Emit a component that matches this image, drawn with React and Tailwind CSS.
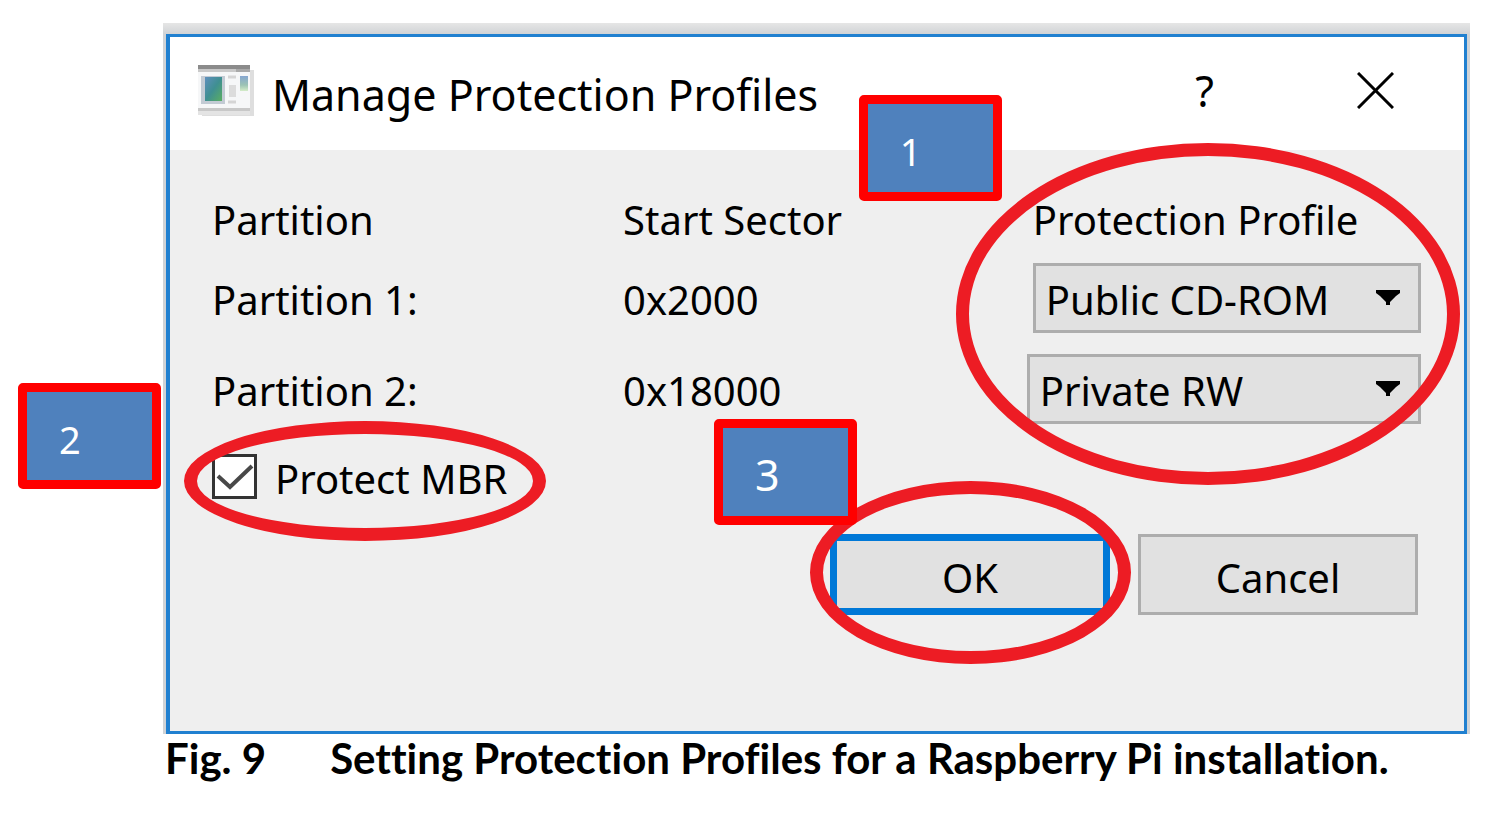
import { useState } from 'react'

const PROFILES = ['Public CD-ROM', 'Private RW', 'Private CD-ROM', 'Public RW']

const PARTITIONS = [
  { id: 1, sector: '0x2000', profile: 'Public CD-ROM', indent: true },
  { id: 2, sector: '0x18000', profile: 'Private RW', indent: false },
]

export default function App() {
  return (
    <main className="min-h-screen bg-white font-['Noto_Sans',sans-serif] text-black">
      <figure className="mr-[18px] ml-[163px] pt-[23px]">
        <div className="bg-[#d0d3d6] bg-linear-to-b from-[#e6e6e6] to-[#d0d3d6] to-[11px] px-[3px] pt-[11px]">
          <ProfilesDialog />
        </div>
        <figcaption className="flex gap-[64px] pl-[2px] font-['Lato',sans-serif] text-[42px] leading-[48px] font-bold [font-variant-ligatures:none]">
          <span>Fig. 9</span>
          <span>Setting Protection Profiles for a Raspberry Pi installation.</span>
        </figcaption>
      </figure>
    </main>
  )
}

function ProfilesDialog() {
  const [protect, setProtect] = useState(true)

  return (
    <section className="border-[3px] border-l-4 border-[#2080d0] bg-[#efefef] text-[40px]">
      <header className="flex h-[113px] items-center bg-white pr-[70px] pb-[6px] pl-[28px]">
        <WindowIcon />
        <h1 className="ml-[18px] grow pt-[10px] text-[43px]">Manage Protection Profiles</h1>
        <button type="button" aria-label="Help" className="mr-[143px] text-[43px] leading-none">
          ?
        </button>
        <button type="button" aria-label="Close">
          <svg viewBox="0 0 37 37" className="size-[37px]" stroke="#000" strokeWidth="3">
            <path d="M1 1L36 36M36 1L1 36" />
          </svg>
        </button>
      </header>

      <div className="pt-[33px] pr-[43px] pb-[116px] pl-[42px]">
        <table className="w-full table-fixed text-left leading-[74px]">
          <thead>
            <tr>
              <th className="w-[34%] pb-[6px] font-normal">Partition</th>
              <th className="w-[33.4%] pb-[6px] font-normal">Start Sector</th>
              <th className="relative pb-[6px] pl-[6px] font-normal whitespace-nowrap">
                Protection Profile
                <Ring className="-top-[40px] -left-[71px] h-[342px] w-[504px]" />
                <Badge className="-top-[88px] -left-[168px] text-[38px]">1</Badge>
              </th>
            </tr>
          </thead>
          <tbody>
            {PARTITIONS.map((p) => (
              <tr key={p.id} className="align-top">
                <td className="pb-[17px]">Partition {p.id}:</td>
                <td className="pb-[17px]">{p.sector}</td>
                <td className={p.indent ? 'pb-[17px] pl-[6px]' : 'pb-[17px]'}>
                  <ProfileSelect id={p.id} value={p.profile} />
                </td>
              </tr>
            ))}
          </tbody>
        </table>

        <div className="relative flex h-[62px] items-center">
          <label className="flex items-center gap-[18px]">
            <span className="relative size-[45px]">
              <input
                type="checkbox"
                checked={protect}
                onChange={(e) => setProtect(e.target.checked)}
                className="block size-[45px] appearance-none border-[3px] border-[#333] bg-white"
              />
              {protect && (
                <svg
                  viewBox="0 0 45 45"
                  className="pointer-events-none absolute inset-0 size-[45px]"
                  fill="none"
                  stroke="#484848"
                  strokeWidth="4"
                >
                  <path d="M6 22L18 33L40 12" />
                </svg>
              )}
            </span>
            <span className="pt-[6px]">Protect MBR</span>
          </label>
          <Ring className="-top-[24px] -left-[28px] h-[120px] w-[362px]" />
          <Badge className="-top-[62px] -left-[194px] text-[38px]">2</Badge>
        </div>

        <div className="mt-[27px] mr-[3px] flex justify-end gap-[28px]">
          <div className="relative">
            <button
              type="button"
              className="h-[81px] w-[280px] border-[7px] border-[#0078d7] bg-[#e1e1e1] pt-[6px]"
            >
              OK
            </button>
            <Ring className="-top-[53px] -left-[20px] h-[183px] w-[321px]" />
            <Badge className="-top-[115px] -left-[116px] text-[43px]">3</Badge>
          </div>
          <button
            type="button"
            className="h-[81px] w-[280px] border-[3px] border-[#adadad] bg-[#e1e1e1] pt-[6px]"
          >
            Cancel
          </button>
        </div>
      </div>
    </section>
  )
}

function ProfileSelect({ id, value }) {
  return (
    <div className="relative">
      <select
        aria-label={`Protection profile for partition ${id}`}
        defaultValue={value}
        className="block h-[70px] w-full appearance-none border-[3px] border-[#adadad] bg-[#e1e1e1] pt-[4px] pl-[10px] leading-[60px]"
      >
        {PROFILES.map((name) => (
          <option key={name}>{name}</option>
        ))}
      </select>
      <svg
        viewBox="0 0 24 15"
        className="pointer-events-none absolute top-[27px] right-[21px] h-[15px] w-[24px]"
      >
        <path d="M0 0H24V3L20 6L14 12V15H10V12L4 6L0 3Z" />
      </svg>
    </div>
  )
}

// hand-drawn red circle round a control
function Ring({ className }) {
  return (
    <span
      aria-hidden="true"
      className={`pointer-events-none absolute z-10 rounded-[50%] border-[13px] border-[#ed1c24] ${className}`}
    />
  )
}

// numbered step marker
function Badge({ className, children }) {
  return (
    <span
      className={`absolute z-20 flex h-[106px] w-[143px] items-center rounded-[5px] border-[9px] border-[#f00] bg-[#4f81bd] pt-[6px] pl-[32px] text-white ${className}`}
    >
      {children}
    </span>
  )
}

function WindowIcon() {
  return (
    <svg viewBox="0 0 56 52" className="h-[52px] w-[56px]" aria-hidden="true">
      <defs>
        <linearGradient id="shot" x1="0" y1="0" x2="1" y2="1">
          <stop offset="0" stopColor="#5f8fbd" />
          <stop offset="0.5" stopColor="#3f8f92" />
          <stop offset="1" stopColor="#5aae62" />
        </linearGradient>
        <linearGradient id="thumb" x1="0" y1="0" x2="0" y2="1">
          <stop offset="0" stopColor="#86a6d0" />
          <stop offset="0.6" stopColor="#9cc3b4" />
          <stop offset="1" stopColor="#d4ecc8" />
        </linearGradient>
      </defs>
      <rect x="4" y="5" width="52" height="46" fill="#dedede" />
      <rect width="52" height="48" fill="#f6f7f8" />
      <rect width="52" height="4" fill="#8b8b8b" />
      <rect y="4" width="52" height="3" fill="#c9c9c9" />
      <rect x="38" y="4" width="14" height="3" fill="#a9a9a9" />
      <rect x="3" y="11" width="24" height="28" fill="#c3cbd4" />
      <rect x="7" y="12" width="17" height="24" fill="url(#shot)" />
      <path d="M30 12h8M30 37h8" stroke="#d5d5d5" strokeWidth="3" />
      <rect x="31" y="20" width="7" height="12" fill="#dcdcdc" />
      <rect x="42" y="11" width="8" height="15" fill="url(#thumb)" />
      <rect y="43" width="52" height="3" fill="#c8c8c8" />
      <rect y="46" width="52" height="4" fill="#e4e4e4" />
    </svg>
  )
}
